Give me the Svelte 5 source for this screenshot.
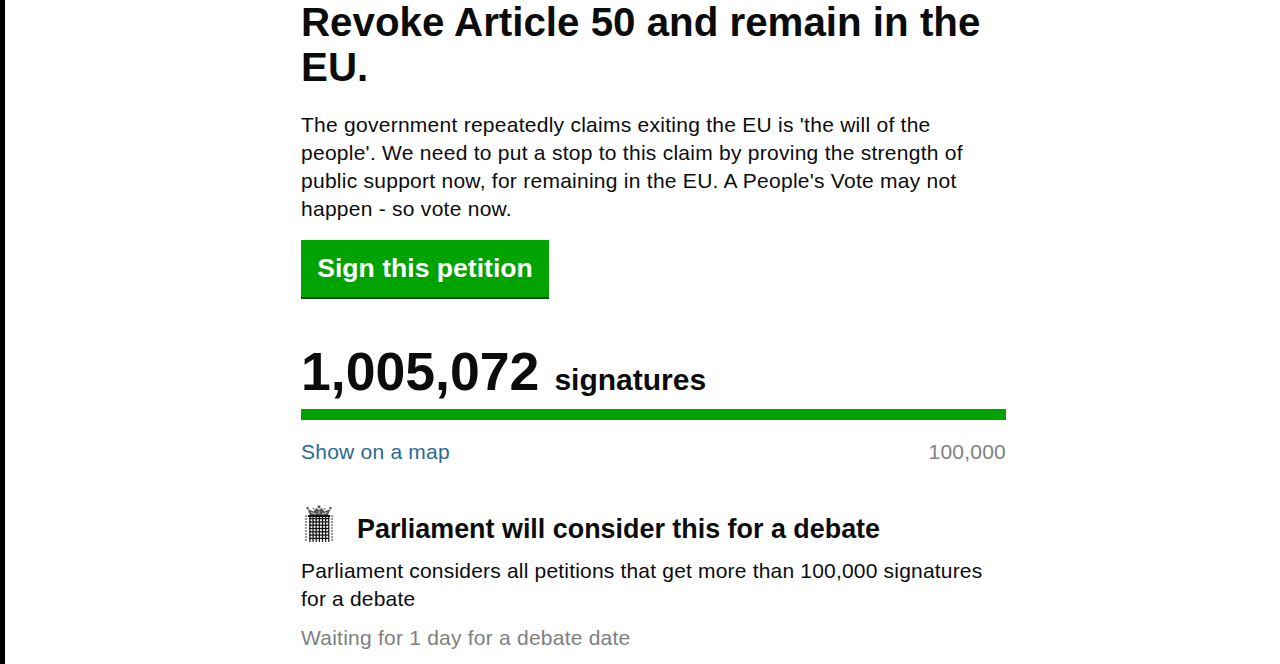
<script>
  const cols = [0, 1, 2, 3, 4, 5, 6];
  const rows = [0, 1, 2, 3, 4, 5, 6];
</script>

<div class="page">
  <main class="content">
    <h1>Revoke Article 50 and remain in the EU.</h1>
    <p class="lead">The government repeatedly claims exiting the EU is 'the will of the people'. We need to put a stop to this claim by proving the strength of public support now, for remaining in the EU. A People's Vote may not happen - so vote now.</p>
    <button class="sign">Sign this petition</button>
    <div class="count"><span class="num">1,005,072</span> <span class="label">signatures</span></div>
    <div class="bar"></div>
    <div class="meta">
      <a href="#map">Show on a map</a>
      <span class="target">100,000</span>
    </div>
    <div class="debate">
      <svg class="portcullis" viewBox="0 0 30 38" width="30" height="38" aria-hidden="true">
        <path d="M6 10 L3.5 4 L9.5 6.5 L12.5 3 L15 5 L17.5 3 L20.5 6.5 L26.5 4 L24 10 Z" fill="#555"/>
        <path d="M7 7.5 L12 9 M23 7.5 L18 9 M15 6 V9" stroke="#ddd" stroke-width="0.9"/>
        <circle cx="3.5" cy="3" r="1.3" fill="#666"/><circle cx="15" cy="1.8" r="1.5" fill="#555"/><circle cx="26.5" cy="3" r="1.3" fill="#666"/>
        <circle cx="9.5" cy="3.8" r="1" fill="#888"/><circle cx="20.5" cy="3.8" r="1" fill="#888"/>
        <rect x="4" y="10" width="22" height="2" fill="#111"/>
        <rect x="5" y="12" width="20" height="23" fill="#f0f0f0"/>
        {#each cols as c}
          <rect x={5.3 + c * 3.15} y="12" width="1.2" height="25" fill="#111"/>
        {/each}
        {#each rows as r}
          <rect x="5" y={13 + r * 3.3} width="20" height="1.2" fill="#111"/>
        {/each}
        <path d="M2 10 V36 M28 10 V36" stroke="#999" stroke-width="2.2" stroke-dasharray="2 1" fill="none"/>
      </svg>
      <h2>Parliament will consider this for a debate</h2>
    </div>
    <p class="body">Parliament considers all petitions that get more than 100,000 signatures for a debate</p>
    <p class="wait">Waiting for 1 day for a debate date</p>
  </main>
</div>

<style>
  :global(body) {
    margin: 0;
    background: #fff;
  }
  .page {
    box-sizing: border-box;
    width: 1280px;
    height: 664px;
    overflow: hidden;
    border-left: 5px solid #000;
    padding-left: 296px;
    font-family: "Liberation Sans", Arial, sans-serif;
    color: #0b0c0c;
  }
  .content {
    width: 705px;
  }
  h1 {
    margin: 0;
    font-size: 40.3px;
    line-height: 45px;
    font-weight: 700;
    color: #0b0c0c;
  }
  .lead {
    margin: 21px 0 0;
    max-width: 680px;
    font-size: 21px;
    line-height: 28px;
    letter-spacing: 0.26px;
  }
  .sign {
    display: block;
    margin: 17px 0 0;
    width: 248px;
    height: 59px;
    padding: 0;
    border: 0;
    border-bottom: 2px solid #0a4a0a;
    background: #00a300;
    color: #fff;
    font: 700 26.6px "Liberation Sans", Arial, sans-serif;
  }
  .count {
    margin-top: 42px;
    display: flex;
    align-items: baseline;
    gap: 15px;
    height: 60px;
  }
  .num {
    font-size: 53.6px;
    font-weight: 700;
    line-height: 60px;
  }
  .label {
    font-size: 30px;
    font-weight: 700;
  }
  .bar {
    margin-top: 8px;
    height: 11px;
    background: #00a300;
  }
  .meta {
    margin-top: 19px;
    display: flex;
    justify-content: space-between;
    font-size: 21px;
    line-height: 26px;
    letter-spacing: 0.23px;
  }
  .meta a {
    color: #2b6a94;
    text-decoration: none;
  }
  .target {
    color: #808080;
  }
  .debate {
    margin-top: 34px;
    display: flex;
    align-items: flex-end;
    gap: 23px;
    height: 47px;
  }
  .portcullis {
    flex: none;
    margin: 0 0 3px 3px;
  }
  h2 {
    margin: 0;
    font-size: 26.9px;
    line-height: 34px;
    font-weight: 700;
  }
  .body {
    margin: 11px 0 0;
    font-size: 21px;
    line-height: 28px;
    letter-spacing: 0.19px;
  }
  .wait {
    margin: 11px 0 0;
    font-size: 21px;
    line-height: 28px;
    letter-spacing: 0.23px;
    color: #808080;
  }
</style>
